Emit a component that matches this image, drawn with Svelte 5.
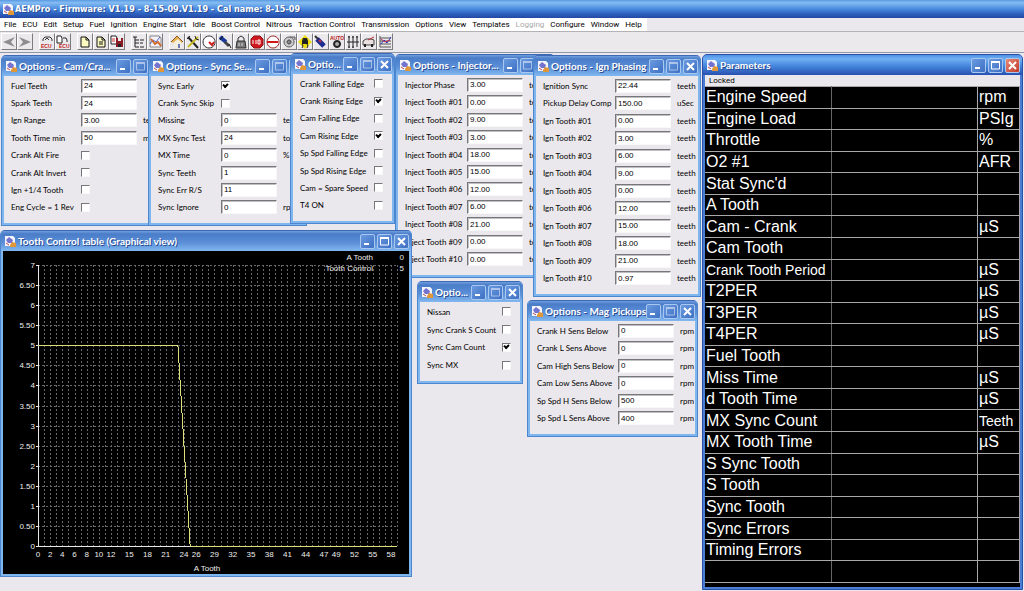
<script lang="ts">
  type Shape = { d?: string; f?: string; s?: string; w?: number; t?: string; x?: number; y?: number };
  type Row = { label: string; value?: string; checked?: boolean; unit?: string };
  type Win = { title: string; x: number; y: number; w: number; h: number; col: number; rows: Row[] };

  const menus = [
    'File', 'ECU', 'Edit', 'Setup', 'Fuel', 'Ignition', 'Engine Start', 'Idle', 'Boost Control',
    'Nitrous', 'Traction Control', 'Transmission', 'Options', 'View', 'Templates', 'Logging',
    'Configure', 'Window', 'Help'
  ];

  const page = 'M3 2h5l3 3v7H3z';
  const tools: { name: string; shapes: Shape[] }[][] = [
    [
      { name: 'Back', shapes: [{ d: 'M13 2L9 7l4 5L1 7z', f: '#8d8d90' }] },
      { name: 'Forward', shapes: [{ d: 'M1 2l4 5-4 5 12-5z', f: '#8d8d90' }] }
    ],
    [
      { name: 'Connect ECU', shapes: [
        { d: 'M3 6V4l2-2h5l2 2v2M5 5l2-2 2 2', s: '#333' },
        { t: 'ECU', x: 1, y: 13, f: '#c01818' }
      ] },
      { name: 'Send to ECU', shapes: [
        { d: 'M1 1h4l1 2v5H1zM7 3h3l1 2v2', f: '#fff', s: '#222' },
        { t: 'ECU', x: 3, y: 13, f: '#c01818' }
      ] }
    ],
    [
      { name: 'New', shapes: [{ d: page, f: '#fdfcc0', s: '#111' }, { d: 'M8 2v3h3', s: '#111' }] },
      { name: 'Open', shapes: [{ d: page, f: '#fdfcc0', s: '#111' }, { d: 'M8 2v3h3M5 7h4M5 9h4', s: '#111' }] },
      { name: 'Save', shapes: [
        { d: 'M1 1h5l1 2v6H1z', f: '#fff', s: '#222' },
        { d: 'M6 3h7v9H6z', f: '#8c1c24' },
        { d: 'M8 3h3v3H8z', f: '#eee' },
        { d: 'M8 9h3v3H8z', f: '#222' },
        { d: 'M2 4h3M2 6h3', s: '#c33' }
      ] }
    ],
    [
      { name: 'Tree', shapes: [{ d: 'M1 2h4M3 2v10M3 5h4M3 8h4M3 12h4M8 5h4M8 8h3M8 12h4', s: '#222' }] },
      { name: 'Graph', shapes: [
        { d: 'M2 1h9l2 2v9H2z', f: '#f2f2fa', s: '#888' },
        { d: 'M2 9l3-4 3 2 4-5', s: '#5560c0' },
        { d: 'M3 4l4 5 3-2 3 4', s: '#d06a28', w: 2 }
      ] }
    ],
    [
      { name: 'Home', shapes: [
        { d: 'M1 7l6-6 6 6-2 1v5H4V8z', f: '#e8b050' },
        { d: 'M4 7l4-3 3 3v6H4z', f: '#f4f0dc' },
        { d: 'M1 7l6-6 6 6', s: '#8a5a20' },
        { d: 'M8 9h2v4H8z', f: '#6a7ab8' }
      ] },
      { name: 'Tools', shapes: [
        { d: 'M2 2l10 11', s: '#222', w: 2 },
        { d: 'M12 2L2 12', s: '#c8b820', w: 2 },
        { d: 'M1 4l3-3M9 1l1 3 3 1', s: '#222' }
      ] },
      { name: 'Gauge', shapes: [
        { d: 'M7 1a6 6 0 1 0 .1 0z', f: '#fff', s: '#333' },
        { d: 'M7 7l3 3 2-3', s: '#d01818', w: 2 }
      ] },
      { name: 'Injector', shapes: [
        { d: 'M2 2l6 5', s: '#1c3c9c', w: 4 },
        { d: 'M7 7l4 4', s: '#444', w: 3 },
        { d: 'M2 5l3-4M11 9l2 4', s: '#111' }
      ] },
      { name: 'Coil', shapes: [
        { d: 'M4 6V3l3-2 3 2v3', s: '#333' },
        { d: 'M3 6h8l1 7H2z', f: '#777', s: '#333' },
        { d: 'M5 8v3M8 8v3', s: '#ddd' }
      ] },
      { name: 'Stop', shapes: [
        { d: 'M4 1h6l3 3v6l-3 3H4l-3-3V4z', f: '#d01820', s: '#8c1014' },
        { d: 'M3 5v4M6 5v4M8 5v4h2V5z', s: '#fff' }
      ] },
      { name: 'Limit', shapes: [
        { d: 'M7 1a6 6 0 1 0 .1 0z', f: '#fff', s: '#a02828' },
        { d: 'M1 7h11', s: '#d01818', w: 2 }
      ] },
      { name: 'Turbo', shapes: [
        { d: 'M7 2a5 5 0 1 0 .1 0zM8 2h5v3', f: '#ccc', s: '#555' },
        { d: 'M7 5a2 2 0 1 0 .1 0z', f: '#888', s: '#444' }
      ] },
      { name: 'Traction', shapes: [
        { d: 'M7 0l7 7-7 7-7-7z', f: '#f0e010' },
        { d: 'M4 6l1-3h4l1 3v3H4z', f: '#222' },
        { d: 'M4 9l1 2-1 2M9 9l1 2-1 2', s: '#222' }
      ] },
      { name: 'Nitrous', shapes: [
        { d: 'M3 4l7 7', s: '#1c2c90', w: 5 },
        { d: 'M1 1l3 3', s: '#333', w: 2 },
        { d: 'M5 5l2 2', s: '#c03040', w: 2 }
      ] },
      { name: 'Auto', shapes: [
        { t: 'AUTO', x: 0, y: 5, f: '#c01818' },
        { d: 'M7 6a3 3 0 1 0 .1 0z', f: '#aaa', s: '#222', w: 2 }
      ] },
      { name: 'Shifter', shapes: [
        { d: 'M1 7h12M3 2v10M7 2v10M11 2v10', s: '#222' },
        { d: 'M2 2h2M6 2h2M10 2h2M2 12h2M6 12h2', s: '#555', w: 2 }
      ] },
      { name: 'Car', shapes: [
        { d: 'M1 6l3-2h5l3 1v5H1z', f: '#e8e0e0', s: '#444' },
        { d: 'M3 9v3M10 9v3', s: '#222', w: 2 },
        { d: 'M6 5l6-3', s: '#c02828' }
      ] },
      { name: 'Chart', shapes: [
        { d: 'M2 1v11h11M2 9h11M2 6h11M2 3h11', s: '#555' },
        { d: 'M3 9l3-4 3 3 4-6', s: '#2838c0' },
        { d: 'M3 4l4 3 5-2', s: '#c83048' }
      ] }
    ]
  ];

  const n = (label: string, value: string, unit = ''): Row => ({ label, value, unit });
  const c = (label: string, checked = false): Row => ({ label, checked });

  const wins: Win[] = [
    { title: 'Options - Cam/Cra...', x: 1, y: 2, w: 167, h: 171, col: 70, rows: [
      n('Fuel Teeth', '24'), n('Spark Teeth', '24'), n('Ign Range', '3.00', 'teeth'),
      n('Tooth Time min', '50', 'mS'), c('Crank Alt Fire'), c('Crank Alt Invert'),
      c('Ign +1/4 Tooth'), c('Eng Cycle = 1 Rev')
    ] },
    { title: 'Options - Sync Se...', x: 148, y: 2, w: 159, h: 171, col: 63, rows: [
      c('Sync Early', true), c('Crank Sync Skip'), n('Missing', '0', 'teeth'),
      n('MX Sync Test', '24', 'tooth'), n('MX Time', '0', '%'), n('Sync Teeth', '1'),
      n('Sync Err R/S', '11'), n('Sync Ignore', '0', 'rpm')
    ] },
    { title: 'Optio...', x: 290, y: 0, w: 105, h: 171, col: 74, rows: [
      c('Crank Falling Edge'), c('Crank Rising Edge', true), c('Cam Falling Edge'),
      c('Cam Rising Edge', true), c('Sp Spd Falling Edge'), c('Sp Spd Rising Edge'),
      c('Cam = Spare Speed'), c('T4 ON')
    ] },
    { title: 'Options - Injector...', x: 395, y: 1, w: 160, h: 224, col: 62, rows: [
      n('Injector Phase', '3.00', 'teeth'),
      ...['0.00', '9.00', '3.00', '18.00', '15.00', '12.00', '6.00', '21.00', '0.00', '0.00'].map(
        (v, i) => n('Inject Tooth #' + String(i + 1).padStart(2, '0'), v, 'teeth')
      )
    ] },
    { title: 'Options - Ign Phasing', x: 533, y: 2, w: 168, h: 242, col: 72, rows: [
      n('Ignition Sync', '22.44', 'teeth'), n('Pickup Delay Comp', '150.00', 'uSec'),
      ...['0.00', '3.00', '6.00', '9.00', '0.00', '12.00', '15.00', '18.00', '21.00', '0.97'].map(
        (v, i) => n('Ign Tooth #' + String(i + 1).padStart(2, '0'), v, 'teeth')
      )
    ] },
    { title: 'Optio...', x: 417, y: 228, w: 106, h: 103, col: 75, rows: [
      c('Nissan'), c('Sync Crank S Count'), c('Sync Cam Count', true), c('Sync MX')
    ] },
    { title: 'Options - Mag Pickups', x: 527, y: 247, w: 171, h: 137, col: 81, rows: [
      n('Crank H Sens Below', '0', 'rpm'), n('Crank L Sens Above', '0', 'rpm'),
      n('Cam High Sens Below', '0', 'rpm'), n('Cam Low Sens Above', '0', 'rpm'),
      n('Sp Spd H Sens Below', '500', 'rpm'), n('Sp Spd L Sens Above', '400', 'rpm')
    ] }
  ];

  const params: [string, string][] = [
    ['Engine Speed', 'rpm'], ['Engine Load', 'PSIg'], ['Throttle', '%'], ['O2 #1', 'AFR'],
    ["Stat Sync'd", ''], ['A Tooth', ''], ['Cam - Crank', 'µS'], ['Cam Tooth', ''],
    ['Crank Tooth Period', 'µS'], ['T2PER', 'µS'], ['T3PER', 'µS'], ['T4PER', 'µS'],
    ['Fuel Tooth', ''], ['Miss Time', 'µS'], ['d Tooth Time', 'µS'], ['MX Sync Count', 'Teeth'],
    ['MX Tooth Time', 'µS'], ['S Sync Tooth', ''], ['S Tooth', ''], ['Sync Tooth', ''],
    ['Sync Errors', ''], ['Timing Errors', ''], ['', '']
  ];

  // plot area inside the chart canvas
  const px = (t: number) => 35 + (t * 359) / 59;
  const py = (v: number) => 295 - (v * 281) / 7;
  const xTicks = [0, 2, 4, 6, 8, 10, 12, 15, 18, 21, 24, 26, 29, 32, 35, 38, 41, 44, 47, 49, 52, 55, 58];
  const yTicks = Array.from({ length: 15 }, (_, i) => i / 2);
  const series = [[0, 5], [23, 5], [25, 0], [59, 0]].map(([t, v]) => `${px(t)},${py(v)}`).join(' ');
</script>

{#snippet appIcon()}
  <svg class="app-icon" viewBox="0 0 12 12" aria-hidden="true">
    <path d="M1 1h8l2 2v8H1z" fill="#f4f4fb" />
    <path d="M2 5l3-3 4 3-1 3H4z" fill="#7474d0" />
    <path d="M6 10l2-3 4 1v4H6z" fill="#e0973a" />
    <path d="M2 8l3 2" stroke="#c05050" />
  </svg>
{/snippet}

{#snippet titlebar(title: string, dim: boolean)}
  <header>
    {@render appIcon()}
    <h2>{title}</h2>
    <button aria-label="Minimize"><svg viewBox="0 0 13 13"><path d="M3 9h5" stroke="#fff" stroke-width="2" /></svg></button>
    <button aria-label="Maximize" class:dim><svg viewBox="0 0 13 13"><path d="M2.500 3v7h8V3" fill="none" stroke="#fff" /><path d="M2 3h9" stroke="#fff" stroke-width="2" /></svg></button>
    <button aria-label="Close" class="close"><svg viewBox="0 0 13 13"><path d="M3 3l7 7M10 3l-7 7" stroke="#fff" stroke-width="2" /></svg></button>
  </header>
{/snippet}

<div class="app">
  <div class="caption">
    {@render appIcon()}
    <h1>AEMPro - Firmware: V1.19 - 8-15-09.V1.19 - Cal name: 8-15-09</h1>
  </div>

  <div class="menubar">
    <nav>
      {#each menus as m}
        <button disabled={m === 'Logging'}>{m}</button>
      {/each}
    </nav>
  </div>

  <div class="toolbar">
    {#each tools as group}
      <div class="group">
        {#each group as tool}
          <button aria-label={tool.name}>
            <svg viewBox="0 0 14 14">
              {#each tool.shapes as s}
                {#if s.t}
                  <text x={s.x} y={s.y} fill={s.f}>{s.t}</text>
                {:else}
                  <path d={s.d} fill={s.f ?? 'none'} stroke={s.s ?? 'none'} stroke-width={s.w ?? 1} />
                {/if}
              {/each}
            </svg>
          </button>
        {/each}
      </div>
    {/each}
  </div>

  <main>
    {#each wins as win}
      <section
        class="window"
        style="left:{win.x}px; top:{win.y}px; width:{win.w}px; height:{win.h}px; --col:{win.col}px"
      >
        {@render titlebar(win.title, true)}
        <div class="form">
          {#each win.rows as row}
            <label>
              <span>{row.label}</span>
              {#if row.value !== undefined}
                <input type="text" value={row.value} />
                <span>{row.unit}</span>
              {:else}
                <input type="checkbox" checked={row.checked} />
              {/if}
            </label>
          {/each}
        </div>
      </section>
    {/each}

    <section class="window chart">
      {@render titlebar('Tooth Control table (Graphical view)', false)}
      <svg class="plot" viewBox="0 0 406 323">
        <g class="grid">
          {#each { length: 59 } as _, i}
            <path d="M{Math.round(px(i + 1))} 14V295" />
          {/each}
          {#each yTicks.slice(1) as v}
            <path d="M35 {Math.round(py(v))}H394" />
          {/each}
        </g>
        <path class="axis" d="M35 14V295H394" />
        {#each yTicks as v}
          <path class="axis" d="M33 {Math.round(py(v))}h3" />
          <text class="end" x="32" y={Math.round(py(v)) + 3}>{v % 1 ? v.toFixed(2) : v}</text>
        {/each}
        {#each xTicks as t}
          <text class="mid" x={px(t)} y="306">{t}</text>
        {/each}
        <text class="mid" x="204" y="320">A Tooth</text>
        <text class="end" x="370" y="9">A Tooth</text>
        <text class="end" x="401" y="9">0</text>
        <text class="end" x="370" y="20">Tooth Control</text>
        <text class="end" x="401" y="20">5</text>
        <polyline points={series} />
      </svg>
    </section>

    <section class="window params">
      {@render titlebar('Parameters', false)}
      <div class="locked">Locked</div>
      <div class="sheet">
        <table>
          <tbody>
            {#each params as [name, unit]}
              <tr>
                <th scope="row" class:long={name.length > 15}>{name}</th>
                <td>&nbsp;</td>
                <td class:long={unit.length > 4}>{unit}</td>
              </tr>
            {/each}
          </tbody>
        </table>
      </div>
    </section>
  </main>
</div>

<style>
  :global(body) {
    margin: 0;
    background: #ebe8ed;
    overflow: hidden;
  }
  .app {
    display: flex;
    flex-direction: column;
    height: 100vh;
    font-family: Lato, "Liberation Sans", sans-serif;
    font-size: 8px;
    color: #000;
  }
  h1, h2 {
    margin: 0;
    color: #fff;
    white-space: nowrap;
    text-shadow: 1px 1px 0 #2a4a90;
  }
  button {
    padding: 0;
    border: 0;
    background: none;
    font: inherit;
    color: inherit;
  }
  button svg { display: block; }

  .caption {
    flex: none;
    height: 18px;
    display: flex;
    align-items: center;
    gap: 1px;
    padding-left: 2px;
    background: linear-gradient(#5a9ae2, #84bcf2 15%, #4a8ade 50%, #2e62c0 75%, #2448a4);
  }
  h1 { font: bold 9px "DejaVu Sans Condensed", "DejaVu Sans", sans-serif; }
  .app-icon {
    width: 12px;
    height: 12px;
    flex: none;
  }

  .menubar {
    flex: none;
    height: 13px;
    border-bottom: 1px solid #b4b2b6;
  }
  nav {
    display: flex;
    gap: 6px;
    width: max-content;
    height: 100%;
    padding: 0 5px 0 4px;
    background: #fff;
    font-family: Roboto, sans-serif;
    font-size: 8px;
  }
  nav button:disabled { color: #aaa; }

  .toolbar {
    flex: none;
    display: flex;
    gap: 6px;
    height: 18px;
    padding: 1px;
    border-bottom: 1px solid #8f97a8;
    background: #ece9ed;
  }
  .group { display: flex; }
  .group button {
    width: 16px;
    height: 17px;
    border: 1px solid;
    border-color: #fff #7c7c80 #7c7c80 #fff;
    box-sizing: border-box;
  }
  .group svg {
    width: 14px;
    height: 14px;
  }
  .group text {
    font: bold 5px "Liberation Sans", sans-serif;
  }

  main {
    flex: 1;
    position: relative;
    overflow: hidden;
    border-left: 1px solid #9a9a9e;
    margin-left: -1px;
  }

  .window {
    position: absolute;
    box-sizing: border-box;
    display: flex;
    flex-direction: column;
    border: 1px solid #4c86cf;
    border-top-color: #3c68b4;
    border-radius: 5px 5px 0 0;
    background: #7fb6ee;
    padding: 0 2px 2px;
    overflow: hidden;
  }
  header {
    flex: none;
    height: 20px;
    display: flex;
    align-items: center;
    gap: 2px;
    margin: 0 -2px;
    padding: 0 2px 0 3px;
    background: linear-gradient(#6f9fdf, #4a7cc8 15%, #5c90d8 60%, #82b8f0);
  }
  h2 {
    flex: 1;
    min-width: 0;
    font: bold 10px Lato, sans-serif;
  }
  header button {
    flex: none;
    width: 15px;
    height: 15px;
    box-sizing: border-box;
    border: 1px solid #a9c8f0;
    border-radius: 2px;
    background: linear-gradient(135deg, #6a9ae0, #3e70c4);
  }
  header button.dim svg { opacity: 0.5; }

  .form {
    flex: 1;
    display: grid;
    grid-auto-rows: 1fr;
    padding: 1px 0 7px 7px;
    background: #ebe8ed;
    overflow: hidden;
  }
  label {
    display: grid;
    grid-template-columns: var(--col) max-content max-content;
    align-items: center;
    white-space: nowrap;
  }
  label span:last-child { padding-left: 6px; }
  input {
    appearance: none;
    box-sizing: border-box;
    margin: 0;
    border: 1px solid;
    border-color: #77777a #f8f8f8 #f8f8f8 #77777a;
    border-radius: 0;
    background: #fff;
  }
  input[type='text'] {
    width: 56px;
    height: 14px;
    padding: 0 2px;
    font: 8px "Liberation Sans", Arial, sans-serif;
    box-shadow: inset 1px 1px 0 #c0c0c4;
  }
  input[type='checkbox'] {
    width: 9px;
    height: 9px;
    display: grid;
    place-items: center;
  }
  input[type='checkbox']:checked::after {
    content: '';
    width: 5px;
    height: 4px;
    margin-bottom: 2px;
    border: solid #000;
    border-width: 0 0 2px 2px;
    box-sizing: border-box;
    transform: rotate(-45deg);
  }

  .chart {
    left: 0;
    top: 177px;
    width: 412px;
  }
  .plot {
    display: block;
    background: #000;
  }
  .plot path, .plot polyline {
    fill: none;
    shape-rendering: crispEdges;
  }
  .grid path {
    stroke: #68686a;
    stroke-dasharray: 2 2;
  }
  .plot .axis { stroke: #e8e8e8; }
  .plot polyline { stroke: #dede78; }
  .plot text {
    fill: #eee;
    font: 8px "Liberation Sans", sans-serif;
  }
  .end { text-anchor: end; }
  .mid { text-anchor: middle; }

  .params {
    top: 1px;
    right: 1px;
    bottom: 1px;
    width: 321px;
    border-color: #2a50a8;
    background: #4a7ed4;
  }
  .params header {
    background: linear-gradient(#4f90e6, #70b0f4 20%, #4586dc 55%, #2850b0);
  }
  .params .close { background: linear-gradient(135deg, #e88a78, #c03c28); }
  .locked {
    flex: none;
    height: 11px;
    padding-left: 4px;
    line-height: 12px;
    background: #ebe8ed;
    font-family: Roboto, sans-serif;
    font-size: 8px;
  }
  .sheet {
    flex: 1;
    min-height: 0;
    padding-bottom: 4px;
    background: #000;
  }
  table {
    width: 100%;
    height: 100%;
    border-collapse: collapse;
    table-layout: fixed;
    color: #fff;
    font: 16px "Liberation Sans", Arial, sans-serif;
    line-height: 18px;
  }
  th, td {
    padding: 0 0 0 1px;
    border: 1px solid #a8a8a8;
    border-left: 0;
    text-align: left;
    font-weight: normal;
    white-space: nowrap;
  }
  th {
    width: 125px;
    border-right-color: #666;
  }
  td:last-child { width: 40px; }
  .long { font-size: 14px; }
</style>
